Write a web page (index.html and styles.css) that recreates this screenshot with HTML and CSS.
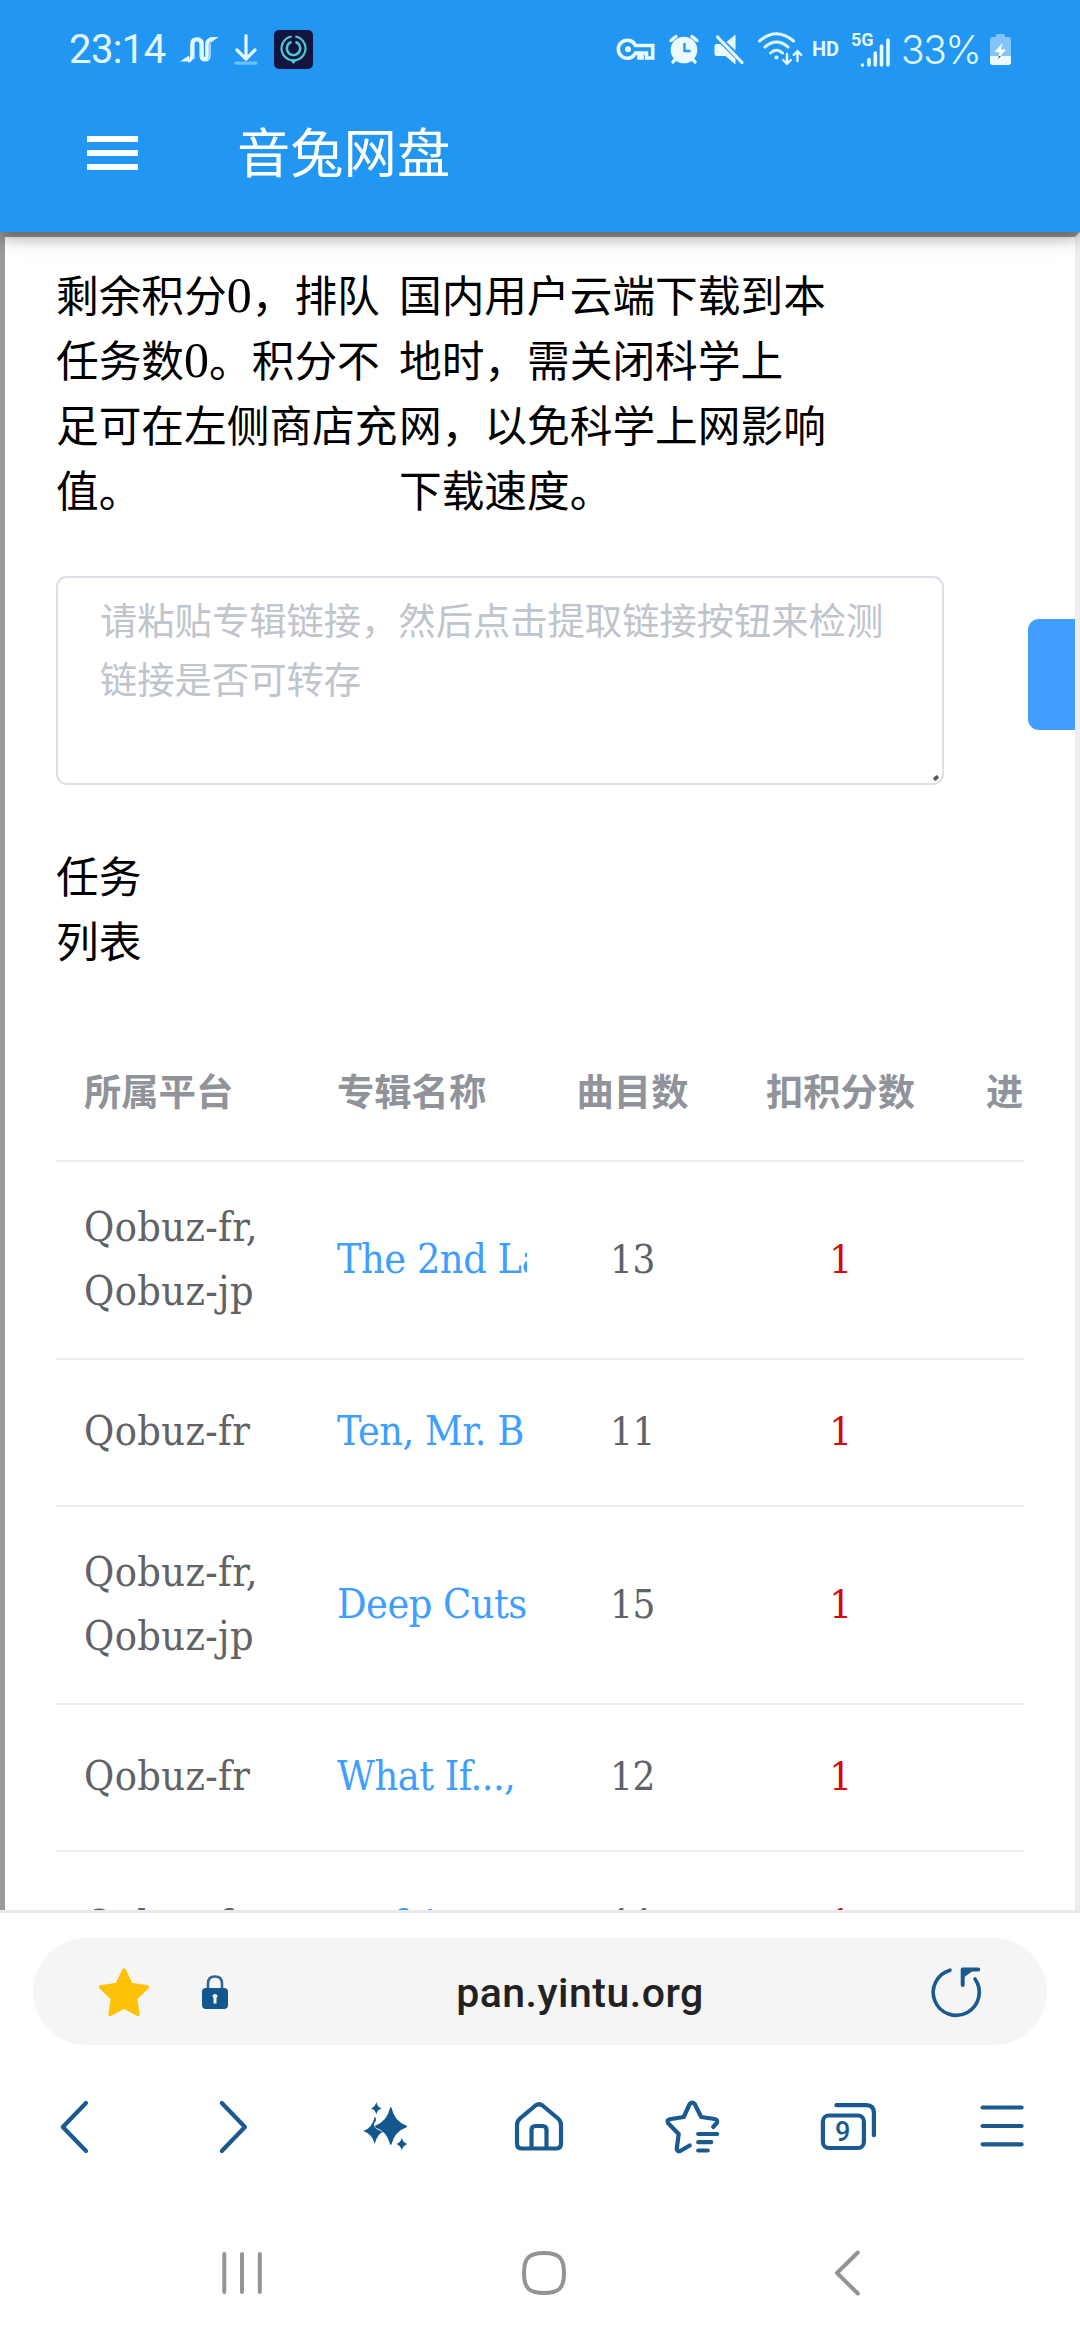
FILE: index.html
```html
<!DOCTYPE html>
<html lang="zh-CN">
<head>
    <meta charset="UTF-8">
    <meta name="viewport" content="width=device-width, initial-scale=1.0">
    <title>音兔网盘</title>
    <link rel="stylesheet" href="styles.css">
</head>
<body>

    <header>
        <div class="status">
            <span class="clock">23:14</span>
            <svg class="s-wave" width="38" height="40" viewBox="181 29 38 40" fill="none" stroke="#e3f9ff">
                <path d="M188 61q4-1 4-6V44q0-5 5-5t5 5v11q0 4 2.500 4t2.500-4V45q0-6 6-6" stroke-width="3.600"/>
                <path d="M194 59V44q0-3 3-3t3 3v11q0 6 5 6t5-6V43" stroke-width="1.200"/>
                <path d="M180 61.500l9-6v6zM218.500 37l-8 6v-6z" fill="#e3f9ff" stroke="none"/>
            </svg>
            <svg class="s-down" width="24" height="40" viewBox="234.500 29 24 40" fill="none" stroke="#e3f9ff" stroke-width="3.200" stroke-linecap="round" stroke-linejoin="round">
                <path d="M246.500 35.500v23M237.500 50l9 9 9-9"/>
                <path d="M236.500 63.200h20" opacity=".4"/>
            </svg>
            <svg class="s-app" width="39" height="40" viewBox="274 29 39 40" fill="none" stroke="#4fc9cb">
                <rect x="274" y="30" width="39" height="39" rx="5" fill="#12153f" stroke="none"/>
                <path d="M291.700 36.500a12 12 0 1 0 3.600 0" stroke-width="2.200"/>
                <path d="M291.500 42a6.700 6.700 0 1 0 4 0" stroke-width="2.400"/>
                <path d="M290 60h7l-3.500 4z" fill="#4fc9cb" stroke="none"/>
            </svg>

            <svg class="s-key" width="37" height="40" viewBox="617.500 29 37 40" fill="none" stroke="#eafaff" stroke-width="3.600">
                <path d="M635 45.500a9 9 0 1 0 0 7.500h3.500v5h3v-5h4.500v5h6.200V45.500z"/>
                <circle cx="627.500" cy="49.200" r="3" fill="#eafaff" stroke="none"/>
            </svg>
            <svg class="s-alarm" width="30" height="40" viewBox="668.500 29 30 40">
                <circle cx="683.500" cy="50" r="13.300" fill="#eafaff"/>
                <path d="M670.500 40.500l5-4M696.500 40.500l-5-4M675 59l-2.500 3M692 59l2.500 3" stroke="#eafaff" stroke-width="3.500" stroke-linecap="round"/>
                <path d="M684 43v8h6" fill="none" stroke="#2196f3" stroke-width="2.400"/>
            </svg>
            <svg class="s-mute" width="30" height="40" viewBox="713.500 29 30 40" fill="#eafaff">
                <path d="M714 46q0-2 2-2h4l15 15v5.500l-10-8.500h-9q-2 0-2-2zM726 42l9-7.500v16z"/>
                <path d="M717 37l24.500 25.500" stroke="#eafaff" stroke-width="3.200" stroke-linecap="round"/>
            </svg>
            <svg class="s-wifi" width="46" height="40" viewBox="757 29 46 40" fill="none" stroke="#e3f9ff" stroke-width="3" stroke-linecap="round">
                <path d="M759.500 41q17-14.500 34 0M765 47q11.500-10 23 0M770.500 53q6-5.500 12 0"/>
                <circle cx="776.500" cy="57.500" r="2" fill="#e3f9ff" stroke="none"/>
                <path d="M787 54v9.500m-3.800-3.500l3.800 3.800 3.800-3.800M797.500 61v-9.500m-3.800 3.500l3.800-3.800 3.800 3.800" stroke-width="2.400"/>
            </svg>
            <span class="hd">HD</span>
            <span class="signal">
                <svg width="31" height="40" viewBox="860 29 31 40" stroke="#e3f9ff" stroke-width="3.600" stroke-linecap="round">
                    <path d="M862.500 65v.1M869 59.500v5.500M875.300 53v12M881.500 46v19M888 40v25"/>
                </svg>
                <b>5G</b>
            </span>
            <span class="percent">33%</span>
            <svg class="s-battery" width="21" height="40" viewBox="990 29 21 40">
                <path d="M996 37v-1.500q0-1.500 1.500-1.500h6q1.500 0 1.500 1.500V37h3q3 0 3 3v22q0 3-3 3h-15q-3 0-3-3V40q0-3 3-3z" fill="#84c5f9"/>
                <path d="M990 56h21v6q0 3-3 3h-15q-3 0-3-3z" fill="#eafaff"/>
                <path d="M1002.500 43l-8 9h5l-1.500 7 8-9.500h-5z" fill="#fff"/>
                <path d="M998 59l1-3h2z" fill="#444"/>
            </svg>
        </div>
        <div class="appbar">
            <div class="burger"><i></i><i></i><i></i></div>
            <h1>音兔网盘</h1>
        </div>
    </header>

    <main>
        <section class="tips">
            <p>剩余积分<span class="num">0</span>，排队任务数<span class="num">0</span>。积分不足可在左侧商店充值。</p>
            <p>国内用户云端下载到本地时，需关闭科学上网，以免科学上网影响下载速度。</p>
        </section>

        <form class="extract">
            <div class="box">请粘贴专辑链接，然后点击提取链接按钮来检测链接是否可转存<i class="grip"></i></div>
            <div class="submit"></div>
        </form>

        <h2>任务列表</h2>

        <div class="tasks">
            <table>
                <colgroup>
                    <col class="c-platform"><col class="c-album"><col class="c-tracks"><col class="c-points"><col class="c-progress">
                </colgroup>
                <tr>
                    <th>所属平台</th>
                    <th>专辑名称</th>
                    <th class="mid">曲目数</th>
                    <th class="mid">扣积分数</th>
                    <th class="progress">进度</th>
                </tr>
                <tr class="tall">
                    <td>Qobuz-fr, Qobuz-jp</td>
                    <td><a>The 2nd Law</a></td>
                    <td class="mid">13</td>
                    <td class="mid points">1</td>
                    <td></td>
                </tr>
                <tr>
                    <td>Qobuz-fr</td>
                    <td><a>Ten, Mr. B</a></td>
                    <td class="mid">11</td>
                    <td class="mid points">1</td>
                    <td></td>
                </tr>
                <tr class="tall">
                    <td>Qobuz-fr, Qobuz-jp</td>
                    <td><a>Deep Cuts</a></td>
                    <td class="mid">15</td>
                    <td class="mid points">1</td>
                    <td></td>
                </tr>
                <tr>
                    <td>Qobuz-fr</td>
                    <td><a>What If...,</a></td>
                    <td class="mid">12</td>
                    <td class="mid points">1</td>
                    <td></td>
                </tr>
                <tr class="last">
                    <td>Qobuz-fr</td>
                    <td><a>&nbsp;&nbsp; of A</a></td>
                    <td class="mid">11</td>
                    <td class="mid points">1</td>
                    <td></td>
                </tr>
            </table>
        </div>
    </main>

    <footer>
        <div class="address">
            <svg width="52" height="50" viewBox="98 1967 52 50">
                <path d="M124 1970l7 14.500 16.500 2.500-12 11.500 2.500 16-14-7.500-14 7.500 2.500-16-12-11.500 16.500-2.500z" fill="#ffc107" stroke="#ffc107" stroke-width="3.500" stroke-linejoin="round"/>
            </svg>
            <svg class="lock" width="26" height="36" viewBox="202 1974 26 36">
                <path d="M208 1990v-6.500q0-7 7-7t7 7v6.500" fill="none" stroke="#2b6595" stroke-width="2.600"/>
                <rect x="202" y="1988" width="26" height="21" rx="4" fill="#12588f"/>
                <path d="M212.500 1996.500a2.500 2.500 0 1 1 5 0l-1 1.500v5.500h-3v-5.500z" fill="#f5f5f5"/>
            </svg>
            <span class="url">pan.yintu.org</span>
            <svg width="52" height="52" viewBox="930 1966 52 52" fill="none" stroke="#1b5a90" stroke-width="3.600" stroke-linecap="round" stroke-linejoin="round">
                <path d="M950 1970.200A23 23 0 1 0 975 1979"/>
                <path d="M962.700 1985v-15.500h15.500" stroke-width="4"/>
                <path d="M963 1970h11l-11 8z" fill="#1b5a90" stroke="none"/>
            </svg>
        </div>

        <div class="toolbar">
            <svg width="30" height="56" viewBox="62 2099 30 56"><path d="M86 2103L62.800 2127 86 2151"/></svg>
            <svg width="30" height="56" viewBox="216.400 2099 30 56"><path d="M222.200 2103L245.300 2127l-23.100 24"/></svg>
            <svg class="spark" width="46" height="56" viewBox="362.700 2099 46 56">
                <path d="M390.500 2108q3 14 15.500 18.500-12.500 4.500-15.500 17.500-3-13-15.500-17.500 12.500-4.500 15.500-18.500z" stroke="#12588f" stroke-width="1.500"/>
                <path d="M374.500 2117q1.500 0 1 4-3.500 4-.500 7 3 2 7.500 4-5.500 2-8 12-2.500-10-11.500-13 8.500-2.500 11.500-14z"/>
                <path d="M376 2102q1 5 5.500 6.500-4.500 1-5.500 6-1-5-5.500-6 4.500-1.500 5.500-6.500zM401.500 2137.500q1 5 5.500 6.500-4.500 1.500-5.500 6.500-1-5-5.500-6.500 4.500-1.500 5.500-6.500z"/>
            </svg>
            <svg width="50" height="56" viewBox="515 2099 50 56">
                <path d="M517 2125q0-4 3-6.500l15.500-13q3.500-2.500 7 0l15.500 13q3 2.500 3 6.500v18.500q0 5-5 5h-34q-5 0-5-5z"/>
                <path d="M531.500 2148v-18q0-4 4-4h7q4 0 4 4v18"/>
            </svg>
            <svg width="56" height="56" viewBox="666.300 2099 56 56">
                <path d="M713.500 2127l3.500-4q1.500-3-2-4l-13.500-2-6.500-13q-2.500-2.500-5 0l-6 13-14 2.200q-3.500 1-1.500 4l10.500 10.800-2 15q.5 3 3.500 2l9.500-5.500M698.500 2134h19M698.500 2142.200h13M698.500 2150.500h9.500"/>
            </svg>
            <span class="tabs">
                <svg width="58" height="56" viewBox="819.600 2099 58 56">
                    <rect x="822.500" y="2115.500" width="41" height="32.500" rx="6"/>
                    <path d="M836 2105.200h30q7.500 0 7.500 8v22"/>
                </svg>
                <b>9</b>
            </span>
            <svg width="46" height="56" viewBox="979.900 2099 46 56"><path d="M982.500 2107.500h39M982.500 2126h39M982.500 2144.300h39"/></svg>
        </div>

        <div class="navkeys">
            <svg width="42" height="48" viewBox="221 2249 42 48"><path d="M224.300 2254v38M242 2254v38M259.800 2254v38"/></svg>
            <svg class="n-home" width="46" height="48" viewBox="521 2249 46 48"><path d="M544 2253c15 0 20 5 20 20s-5 20-20 20-20-5-20-20 5-20 20-20z"/></svg>
            <svg class="n-back" width="28" height="48" viewBox="834 2249 28 48"><path d="M857.800 2252.500L837 2273l20.800 20.500"/></svg>
        </div>
    </footer>

</body>
</html>
```

FILE: styles.css
```css
* {
    box-sizing: border-box;
}
body {
    margin: 0;
    background-color: #fff;
    font-family: "DejaVu Serif Condensed", "DejaVu Serif", "Noto Sans CJK SC", serif;
    width: 1080px;
    height: 2340px;
    overflow: hidden;
}
svg {
    display: block;
    flex: none;
    overflow: visible;
}
h1, h2, p {
    margin: 0;
    font-weight: normal;
    font-family: "Noto Sans CJK SC", sans-serif;
}

/* header */
header {
    position: relative;
    z-index: 1;
    height: 232px;
    background-color: #2196f3;
    box-shadow: 0 5px 11px -3px rgba(0, 0, 0, 0.2), 0 9px 13px rgba(0, 0, 0, 0.14), 0 3px 27px rgba(0, 0, 0, 0.12);
}
.status {
    display: flex;
    align-items: center;
    height: 98px;
    padding-left: 69px;
    color: #e3f9ff;
    font-family: Roboto, sans-serif;
    font-size: 40px;
    white-space: nowrap;
}
.clock {
    width: 112px;
    letter-spacing: -0.6px;
}
.s-down {
    margin-left: 15px;
}
.s-app {
    margin-left: 16px;
}
.s-key {
    margin-left: 305px;
}
.s-alarm {
    margin-left: 14px;
}
.s-mute {
    margin-left: 15px;
}
.s-wifi {
    margin-left: 13px;
}
.hd {
    width: 38px;
    margin-left: 9px;
    font-size: 20px;
    font-weight: 700;
}
.signal {
    position: relative;
    margin-left: 10px;
}
.signal b {
    position: absolute;
    left: -9px;
    top: 0;
    font-size: 18px;
    font-weight: 700;
    line-height: 22px;
}
.percent {
    width: 89px;
    margin-left: 10px;
    font-family: Inter, sans-serif;
    font-size: 39px;
    font-weight: 300;
    letter-spacing: -1.5px;
}
.appbar {
    display: flex;
    align-items: center;
    height: 110px;
    padding-left: 87px;
}
.burger {
    display: flex;
    flex-direction: column;
    gap: 8px;
    width: 51px;
    margin-right: 99px;
}
.burger i {
    height: 6px;
    background-color: #fff;
}
h1 {
    margin-top: -6px;
    font-size: 53.3px;
    line-height: 80px;
    color: #fff;
}

/* page */
main {
    height: 1678px;
    overflow: hidden;
    border: 5px solid #9a9a9a;
    border-right-color: #eee;
    border-bottom: 0;
    padding: 24px 0 0 51px;
}
.tips {
    display: grid;
    grid-template-columns: 343px 440px;
    font-size: 42.7px;
    line-height: 65px;
}
.num {
    font-family: "Liberation Serif", serif;
    font-size: 50px;
    line-height: 1;
}
.extract {
    display: flex;
    align-items: center;
    margin-top: 55px;
}
.box {
    position: relative;
    flex: none;
    width: 888px;
    height: 209px;
    padding: 12px 42px;
    border: 2px solid #dcdfe6;
    border-radius: 11px;
    color: #c0c4cc;
    font-family: "Noto Sans CJK SC", sans-serif;
    font-size: 37.3px;
    line-height: 59px;
}
.grip {
    position: absolute;
    right: 3px;
    bottom: 3px;
    width: 6px;
    height: 4px;
    border-radius: 2px;
    background-color: #555;
    transform: rotate(-45deg);
}
.submit {
    flex: none;
    width: 200px;
    height: 111px;
    margin: -12px 0 0 84px;
    border-radius: 11px;
    background-color: #409eff;
}
h2 {
    width: 86px;
    margin-top: 57px;
    font-size: 42.7px;
    line-height: 65px;
}

/* task list */
.tasks {
    width: 968px;
    margin-top: 48px;
    overflow: hidden;
}
table {
    width: 1114px;
    table-layout: fixed;
    border-collapse: separate;
    border-spacing: 0;
}
.c-platform {
    width: 253px;
}
.c-album {
    width: 246px;
}
.c-tracks {
    width: 155px;
}
.c-points {
    width: 261px;
}
.c-progress {
    width: 199px;
}
th, td {
    padding: 0 28px;
    border-bottom: 2px solid #ebeef0;
    text-align: left;
    vertical-align: middle;
}
th {
    height: 142px;
    color: #909399;
    font-family: "Noto Sans CJK SC", sans-serif;
    font-size: 37.3px;
    font-weight: bold;
    white-space: nowrap;
}
td {
    height: 147px;
    padding-bottom: 3px;
    color: #606266;
    font-size: 41px;
    line-height: 64px;
    letter-spacing: 0.4px;
}
.tall td {
    height: 198px;
}
.last td {
    padding-bottom: 0;
}
.mid {
    padding: 0;
    text-align: center;
}
td.mid {
    padding: 0 0 3px;
    font-size: 40px;
    letter-spacing: -0.5px;
}
.progress {
    padding-left: 15px;
}
.points {
    color: #d50b0b;
}
td a {
    display: block;
    overflow: hidden;
    white-space: nowrap;
    color: #409eff;
    letter-spacing: -0.5px;
}

/* browser bar */
footer {
    height: 430px;
    padding: 25px 33px 0;
    border-top: 3px solid #e9e9e9;
    background-color: #fff;
}
.address {
    display: flex;
    align-items: center;
    height: 107px;
    padding: 0 65px;
    border-radius: 54px;
    background-color: #f5f5f5;
}
.lock {
    margin-left: 52px;
}
.url {
    flex: 1;
    padding-top: 2px;
    margin-left: 2px;
    color: #222;
    font-family: Roboto, sans-serif;
    font-size: 41px;
    font-weight: 500;
    letter-spacing: 0.5px;
    text-align: center;
}
.toolbar {
    display: grid;
    grid-template-columns: repeat(7, 1fr);
    justify-items: center;
    height: 56px;
    margin: 54px -33px 0;
}
.toolbar svg {
    fill: none;
    stroke: #1b5a90;
    stroke-width: 4.200;
    stroke-linecap: round;
    stroke-linejoin: round;
}
.toolbar .spark {
    fill: #12588f;
    stroke: none;
}
.tabs {
    position: relative;
}
.tabs b {
    position: absolute;
    left: 3px;
    top: 16px;
    width: 40px;
    line-height: 34px;
    text-align: center;
    color: #1b5a90;
    font-family: Roboto, sans-serif;
    font-size: 27px;
    font-weight: 500;
}
.navkeys {
    display: flex;
    margin: 94px 0 0 188px;
}
.navkeys svg {
    fill: none;
    stroke: #949494;
    stroke-width: 4;
    stroke-linecap: round;
    stroke-linejoin: round;
}
.n-home {
    margin-left: 258px;
}
.n-back {
    margin-left: 267px;
}
```
